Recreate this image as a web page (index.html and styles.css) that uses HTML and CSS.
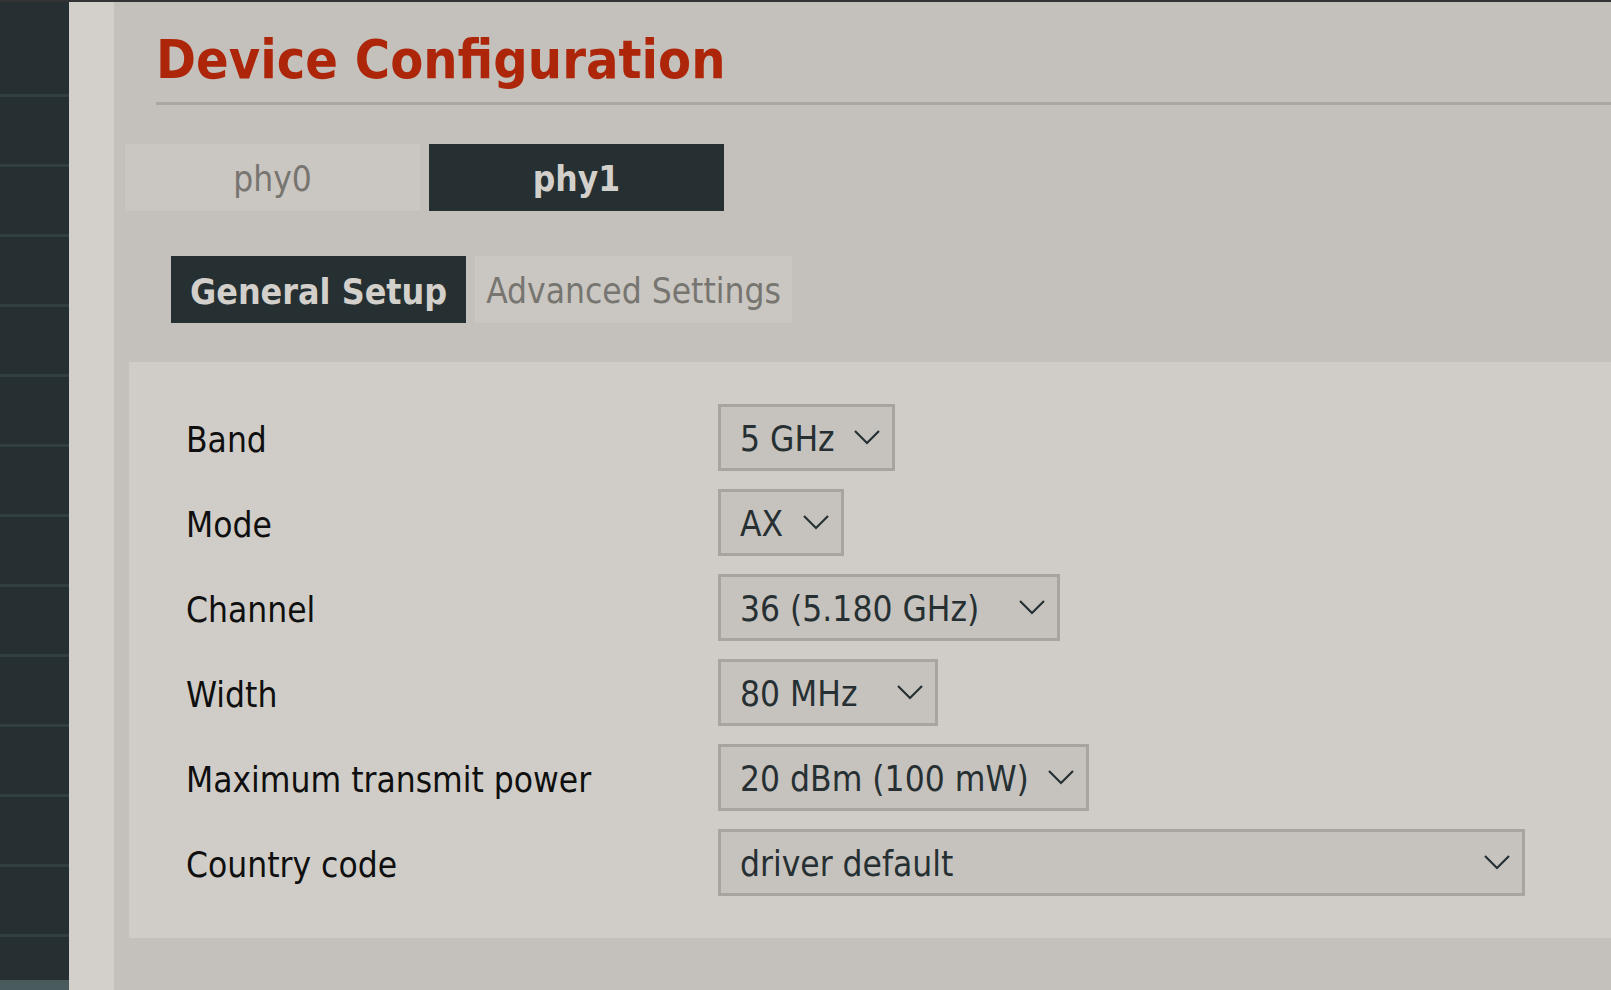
FILE: index.html
```html
<!DOCTYPE html>
<html lang="en">
<head>
    <meta charset="UTF-8">
    <meta name="viewport" content="width=device-width, initial-scale=1.0">
    <title>Device Configuration</title>
    <link rel="stylesheet" href="styles.css">
</head>

<body>
    <div class="sidebar">
        <div class="nav-item nav-top"></div>
        <div class="nav-item"></div>
        <div class="nav-item"></div>
        <div class="nav-item"></div>
        <div class="nav-item"></div>
        <div class="nav-item"></div>
        <div class="nav-item"></div>
        <div class="nav-item"></div>
        <div class="nav-item"></div>
        <div class="nav-item"></div>
        <div class="nav-item"></div>
        <div class="nav-item"></div>
        <div class="nav-item"></div>
        <div class="nav-rest"></div>
        <div class="nav-active"></div>
    </div>
    <div class="gutter"></div>

    <div class="main">
        <h1 class="title">Device Configuration</h1>

        <div class="tabs">
            <div class="tab">phy0</div>
            <div class="tab active">phy1</div>
        </div>

        <div class="subtabs">
            <div class="subtab active">General Setup</div>
            <div class="subtab">Advanced Settings</div>
        </div>

        <div class="panel">
            <div class="row">
                <label class="label">Band</label>
                <select class="field">
                    <option selected>5 GHz</option>
                    <option>6 GHz</option>
                </select>
            </div>
            <div class="row">
                <label class="label">Mode</label>
                <select class="field">
                    <option>N</option>
                    <option>AC</option>
                    <option selected>AX</option>
                </select>
            </div>
            <div class="row">
                <label class="label">Channel</label>
                <select class="field">
                    <option>auto</option>
                    <option selected>36 (5.180 GHz)</option>
                    <option>149 (5.745 GHz)</option>
                </select>
            </div>
            <div class="row">
                <label class="label">Width</label>
                <select class="field">
                    <option>20 MHz</option>
                    <option>40 MHz</option>
                    <option selected>80 MHz</option>
                    <option>160 MHz</option>
                </select>
            </div>
            <div class="row">
                <label class="label">Maximum transmit power</label>
                <select class="field">
                    <option>driver default</option>
                    <option selected>20 dBm (100 mW)</option>
                </select>
            </div>
            <div class="row">
                <label class="label">Country code</label>
                <select class="field wide"><option>driver default</option></select>
            </div>
        </div>
    </div>
</body>
</html>
```

FILE: styles.css
```css
* {
    margin: 0;
    padding: 0;
    box-sizing: border-box;
}
html, body {
    height: 100%;
}
body {
    display: flex;
    border-top: 2px solid #333335;
    font-family: "DejaVu Sans Condensed", "DejaVu Sans", sans-serif;
    font-stretch: condensed;
    background: #c4c1bc;
    overflow: hidden;
}

/* left nav */
.sidebar {
    width: 69px;
    flex-shrink: 0;
    background: #263033;
    display: flex;
    flex-direction: column;
}
.nav-item {
    height: 70px;
    border-bottom: 3px solid #323f40;
}
.nav-top {
    height: 95px;
}
.nav-rest {
    height: 43px;
}
.nav-active {
    flex: 1;
    background: #4a5b5e;
}
.gutter {
    width: 45px;
    flex-shrink: 0;
    background: #d3d0cb;
}

.main {
    flex: 1;
    padding-top: 26px;
    min-width: 0;
}
.title {
    margin-left: 42px;
    padding-bottom: 10px;
    border-bottom: 3px solid #aaa7a2;
    font-size: 53.6px;
    line-height: 64px;
    font-weight: bold;
    color: #ad2609;
}

/* phy tabs */
.tabs {
    display: flex;
    gap: 9px;
    margin: 39px 0 0 11px;
}
.tab {
    width: 295px;
    height: 67px;
    padding-top: 3px;
    display: flex;
    align-items: center;
    justify-content: center;
    background: #cac7c2;
    color: #787570;
    font-size: 35px;
}
.tab.active {
    background: #263033;
    color: #d3d0cb;
    font-weight: bold;
}

.subtabs {
    display: flex;
    gap: 9px;
    margin: 45px 0 0 57px;
}
.subtab {
    height: 67px;
    padding: 3px 11px 0;
    display: flex;
    align-items: center;
    background: #cac7c2;
    color: #777570;
    font-size: 35px;
}
.subtab.active {
    padding: 3px 19px 0;
    background: #263033;
    color: #d3d0cb;
    font-weight: bold;
    font-size: 35.5px;
}

/* form */
.panel {
    margin: 39px 0 0 15px;
    padding: 42px 0 42px 57px;
    background: #d0cdc8;
    display: flex;
    flex-direction: column;
    gap: 18px;
}
.row {
    display: flex;
    align-items: center;
}
.label {
    width: 532px;
    padding-top: 4px;
    font-size: 35px;
    color: #0f0f0f;
}
.field {
    appearance: none;
    -webkit-appearance: none;
    height: 67px;
    padding: 3px 57px 0 19px;
    border: 3px solid #a8a5a0;
    border-radius: 0;
    background: #c6c3be url("data:image/svg+xml,%3Csvg xmlns='http://www.w3.org/2000/svg' width='26' height='15' viewBox='0 0 26 15'%3E%3Cpolyline points='1,1 13,13 25,1' fill='none' stroke='%23263033' stroke-width='2.2'/%3E%3C/svg%3E") no-repeat right 12px center;
    color: #263033;
    font-family: inherit;
    font-stretch: condensed;
    font-size: 35px;
}
.field.wide {
    width: 807px;
}
```
